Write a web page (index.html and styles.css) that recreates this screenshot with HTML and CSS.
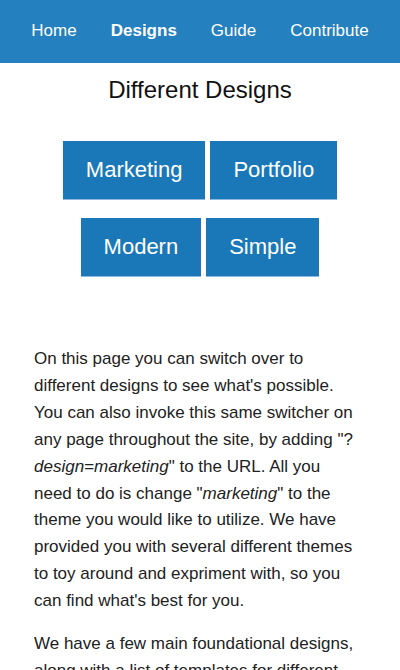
FILE: index.html
```html
<!DOCTYPE html>
<html>
<head>
<meta charset="utf-8">
<link rel="stylesheet" href="styles.css">
</head>
<body>
<nav class="nav">
  <a class="nav-item">Home</a>
  <a class="nav-item active">Designs</a>
  <a class="nav-item">Guide</a>
  <a class="nav-item">Contribute</a>
</nav>
<main class="main">
  <h1 class="title">Different Designs</h1>
  <div class="buttons">
    <a class="btn">Marketing</a>
    <a class="btn">Portfolio</a>
    <a class="btn">Modern</a>
    <a class="btn">Simple</a>
  </div>
  <p class="text">On this page you can switch over to different designs to see what's possible. You can also invoke this same switcher on any page throughout the site, by adding "?<em>design=marketing</em>" to the URL. All you need to do is change "<em>marketing</em>" to the theme you would like to utilize. We have provided you with several different themes to toy around and expriment with, so you can find what's best for you.</p>
  <p class="text">We have a few main foundational designs, along with a list of templates for different purposes and industries that you can use.</p>
</main>
</body>
</html>
```
FILE: styles.css
```css
html, body {
  margin: 0;
  padding: 0;
  background: #fff;
  font-family: "Liberation Sans", Arial, sans-serif;
  color: #222;
}
.nav {
  height: 63px;
  background: #2480be;
  display: flex;
  justify-content: center;
  align-items: center;
  padding-bottom: 2px;
  box-sizing: border-box;
}
.nav-item {
  color: #fff;
  font-size: 17px;
  padding: 0 17px;
}
.nav-item.active {
  font-weight: bold;
}
.main {
  padding: 0 34px;
}
.title {
  margin: 0;
  padding-top: 13px;
  font-size: 24px;
  font-weight: normal;
  text-align: center;
  color: #111;
  line-height: 28px;
}
.buttons {
  display: flex;
  flex-wrap: wrap;
  justify-content: center;
  column-gap: 5px;
  row-gap: 19px;
  margin-top: 37px;
}
.btn {
  display: block;
  background: #1a78b9;
  color: #fff;
  font-size: 22px;
  line-height: 58px;
  padding: 0 23px;
  box-shadow: 0 1px 0 #8db8df;
}
.text {
  font-size: 17px;
  line-height: 26.9px;
  margin: 0 0 16px;
  max-width: 324px;
}
.buttons + .text {
  margin-top: 70px;
}
```
